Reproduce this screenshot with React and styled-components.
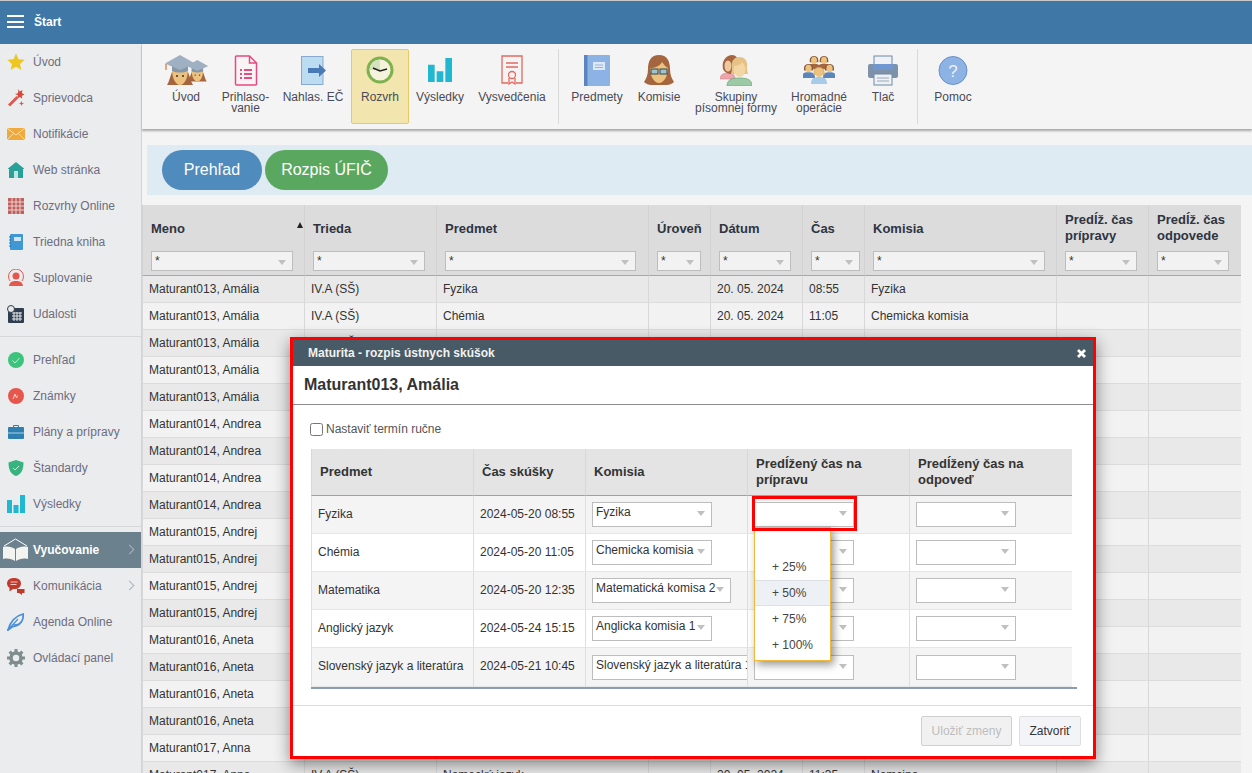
import React from 'react';
import styled, { createGlobalStyle } from 'styled-components';

const Global = createGlobalStyle`
  html, body { margin: 0; padding: 0; height: 773px; overflow: hidden; background: #f4f4f4; }
  body { font-family: "Liberation Sans", Arial, sans-serif; font-size: 12px; color: #333; }
  * { box-sizing: border-box; }
`;

const Page = styled.div`
  position: relative;
  width: 1252px;
  height: 773px;
  overflow: hidden;
`;
const TopBar = styled.div`
  height: 44px;
  padding: 0 0 2px 7px;
  background: #3f78a6;
  border-top: 1px solid #c9c9c9;
  display: flex;
  align-items: center;
  gap: 10px;
  color: #fff;
  font-weight: bold;
  position: relative;
  z-index: 3;
`;
const Burger = styled.div`
  width: 17px;
  height: 13px;
  border-top: 2px solid #fff;
  border-bottom: 2px solid #fff;
  position: relative;
  &::after {
    content: '';
    position: absolute;
    left: 0;
    right: 0;
    top: 3.5px;
    height: 2px;
    background: #fff;
  }
`;
const Shell = styled.div`
  display: flex;
  height: 729px;
`;
const Sidebar = styled.div`
  width: 142px;
  flex: none;
  background: #ebecee;
  border-right: 1px solid #d4d4d4;
`;
const NavItem = styled.div`
  height: 36px;
  display: flex;
  align-items: center;
  padding-left: ${p => (p.$active ? '2px' : '7px')};
  gap: ${p => (p.$active ? '4px' : '8px')};
  color: ${p => (p.$active ? '#fff' : '#6d6d80')};
  font-weight: ${p => (p.$active ? 'bold' : 'normal')};
  background: ${p => (p.$active ? '#6b828e' : 'transparent')};
  position: relative;
  svg { flex: none; }
`;
const NavArrow = styled.span`
  position: absolute;
  left: 126px;
  top: 14px;
  width: 7px;
  height: 7px;
  border-top: 1px solid #a9b4ba;
  border-right: 1px solid #a9b4ba;
  transform: rotate(45deg);
`;
const NavLine = styled.div`
  height: 1px;
  background: #d6d7d9;
  margin: 4px 0 5px;
`;
const Main = styled.div`
  flex: 1;
  min-width: 0;
  background: #f4f4f4;
`;
const Toolbar = styled.div`
  height: 85px;
  padding: 5px 0 0 14px;
  display: flex;
  align-items: flex-start;
  background: #f4f4f4;
  box-shadow: 0 2px 2px #a8a8a8;
`;
const Tool = styled.div`
  width: ${p => p.$w}px;
  height: 75px;
  flex: none;
  padding-top: 5px;
  display: flex;
  flex-direction: column;
  align-items: center;
  text-align: center;
  line-height: 11px;
  color: #4a4a55;
  border-radius: 2px;
  border: 1px solid ${p => (p.$on ? '#e9c963' : 'transparent')};
  background: ${p => (p.$on ? '#f2e5ad' : 'transparent')};
  white-space: pre-line;
`;
const ToolIcon = styled.div`
  height: 30px;
  margin-bottom: 7px;
  flex: none;
  display: flex;
  align-items: center;
  justify-content: center;
  svg { flex: none; }
`;
const ToolSep = styled.div`
  width: 1px;
  height: 75px;
  flex: none;
  background: #d9d9d9;
  margin: 0 ${p => p.$r}px 0 ${p => p.$l}px;
`;
const Band = styled.div`
  height: 50px;
  margin: 16px 0 10px 5px;
  padding: 5px 0 0 15px;
  display: flex;
  gap: 3px;
  background: #deebf3;
`;
const Pill = styled.div`
  width: ${p => p.$w}px;
  height: 40px;
  border-radius: 20px;
  display: flex;
  align-items: center;
  justify-content: center;
  color: #fff;
  font-size: 16px;
  background: ${p => p.$bg};
`;
const Grid = styled.table`
  table-layout: fixed;
  border-collapse: separate;
  border-spacing: 0;
  width: ${p => p.$w}px;
`;
const Col = styled.col`
  width: ${p => p.$w}px;
`;
const Head = styled.th`
  height: 71px;
  padding: 0 0 0 8px;
  text-align: left;
  vertical-align: top;
  background: #dcdcdc;
  border-left: 1px solid #d2d2d2;
  border-bottom: 1px solid #a2a9ae;
  position: relative;
`;
const HeadLabel = styled.div`
  height: 46px;
  padding-top: ${p => (p.$single ? '1px' : '0')};
  display: flex;
  align-items: center;
  font-size: 13px;
  line-height: 16px;
  color: #2f3440;
`;
const SortMark = styled.span`
  position: absolute;
  right: 1px;
  top: 17px;
  border-left: 3.5px solid transparent;
  border-right: 3.5px solid transparent;
  border-bottom: 6px solid #222;
`;
const Row = styled.tr`
  background: ${p => (p.$odd ? '#e9e9e9' : '#f2f2f2')};
`;
const Cell = styled.td`
  height: 27px;
  padding: 0 6px;
  white-space: nowrap;
  overflow: hidden;
  border-left: 1px solid #d8d8d8;
  border-bottom: 1px solid #dcdcdc;
`;
const Select = styled.div`
  width: ${p => p.$w}px;
  height: ${p => p.$h}px;
  padding: 2px 0 0 3px;
  background: ${p => p.$bg};
  border: 1px solid #bdbdbd;
  font-size: 12px;
  font-weight: normal;
  line-height: 14px;
  color: #333;
  white-space: nowrap;
  overflow: hidden;
  position: relative;
  &::after {
    content: '';
    position: absolute;
    right: 6px;
    top: 8px;
    border-left: 4px solid transparent;
    border-right: 4px solid transparent;
    border-top: 5px solid #c0c0c0;
  }
`;
const Modal = styled.div`
  position: absolute;
  left: 290px;
  top: 337px;
  width: 806px;
  height: 422px;
  border: 3px solid #ff0000;
  background: #fff;
  display: flex;
  flex-direction: column;
  box-shadow: 0 5px 15px rgba(0, 0, 0, 0.45);
  z-index: 5;
`;
const ModalTitle = styled.div`
  height: 26px;
  flex: none;
  padding: 0 6px 0 15px;
  display: flex;
  align-items: center;
  justify-content: space-between;
  background: #475a65;
  color: #f2f2f2;
  font-weight: bold;
`;
const ModalName = styled.div`
  height: 39px;
  flex: none;
  padding-left: 11px;
  display: flex;
  align-items: center;
  border-bottom: 1px solid #8c8c8c;
  font-size: 16px;
  font-weight: bold;
  color: #333;
`;
const ModalBody = styled.div`
  flex: 1;
  padding: 18px 0 0 18px;
`;
const CheckRow = styled.label`
  height: 13px;
  margin-bottom: 13px;
  display: flex;
  align-items: flex-start;
  gap: 3px;
  line-height: 12px;
  color: #555;
  input { width: 13px; height: 13px; margin: 0 0 0 -1px; }
`;
const ExamWrap = styled.div`
  width: 766px;
  border-bottom: 2px solid #8a9dae;
`;
const ExamHead = styled.th`
  height: 47px;
  padding: 0 9px 0 8px;
  text-align: left;
  font-size: 13px;
  line-height: 16px;
  color: #333;
  background: #e4e4e4;
  border-left: 1px solid #d8d8d8;
  border-bottom: 1px solid #9ba3a9;
`;
const ExamRow = styled.tr`
  background: ${p => (p.$odd ? '#f4f4f4' : '#fff')};
`;
const ExamCell = styled.td`
  height: ${p => p.$h}px;
  padding: 0 6px ${p => (p.$txt ? '2px' : '0')};
  white-space: nowrap;
  overflow: hidden;
  border-left: 1px solid #dedede;
  border-bottom: 1px solid #e6e6e6;
`;
const ModalFoot = styled.div`
  height: 51px;
  flex: none;
  padding: 10px 12px 0 0;
  display: flex;
  justify-content: flex-end;
  gap: 7px;
  border-top: 1px solid #dcdcdc;
`;
const Btn = styled.div`
  width: ${p => p.$w}px;
  height: 30px;
  display: flex;
  align-items: center;
  justify-content: center;
  border-radius: 2px;
  border: 1px solid ${p => (p.$off ? '#cfcfcf' : '#dedede')};
  background: ${p => (p.$off ? '#f1f1f1' : '#f3f4f8')};
  color: ${p => (p.$off ? '#bdbdbd' : '#333')};
`;
const Highlight = styled.div`
  position: absolute;
  left: 459px;
  top: 156px;
  width: 105px;
  height: 35px;
  border: 3px solid #ff0000;
  z-index: 3;
`;
const Popup = styled.div`
  position: absolute;
  left: 461px;
  top: 187px;
  width: 77px;
  height: 134px;
  background: #fff;
  border: 1px solid #f0b93a;
  box-shadow: 3px 4px 8px rgba(0, 0, 0, 0.4);
  z-index: 2;
`;
const PopupItem = styled.div`
  height: 26px;
  padding-left: 17px;
  display: flex;
  align-items: center;
  color: #444;
  background: ${p => (p.$on ? '#edf0f4' : 'transparent')};
  border-top: 1px solid ${p => (p.$on ? '#dcdfe3' : 'transparent')};
  border-bottom: 1px solid ${p => (p.$on ? '#dcdfe3' : 'transparent')};
`;

// sidebar icons
const Star = () => <svg width="18" height="18" viewBox="0 0 18 18"><path d="M9 .5l2.500 5.700 6.200.6-4.700 4.100 1.400 6.100L9 13.800l-5.400 3.200L5 10.900.3 6.800l6.200-.6z" fill="#edc71f" /></svg>;
const Wand = () => <svg width="18" height="20" viewBox="0 0 18 20"><path d="M1 16.500L9.500 8l2 2L3 18.500z" fill="#e2574c" /><path d="M11.500 1l1.200 2.600L15.500 2l-.7 3L17.500 6.500l-2.700 1.200.5 3-2.400-1.800-2.400 1.300.4-3L8 6l3-.8z" fill="#d9473c" /><path d="M14.500 13l.7 1.800 1.800.7-1.800.7-.7 1.800-.7-1.800-1.800-.7 1.800-.7z" fill="#e2574c" /></svg>;
const Mail = () => <svg width="18" height="18" viewBox="0 0 18 14"><rect y="1" width="18" height="12" fill="#f0a93c" /><path d="M0 1l9 7 9-7M0 13l6.500-6.500M18 13l-6.500-6.500" stroke="#fbe0ae" strokeWidth="1" fill="none" /></svg>;
const House = () => <svg width="18" height="18" viewBox="0 0 18 18"><path d="M9 1l8 6.500V8h-1v9H2V8H1v-.5z" fill="#2aa198" /><rect x="7" y="10" width="4" height="7" fill="#bfe6e2" /></svg>;
const CalGrid = () => <svg width="18" height="18" viewBox="0 0 18 18"><rect x="1" y="1" width="16" height="16" fill="#c0605c" /><path d="M1 5h16M1 9h16M1 13h16M5 1v16M9 1v16M13 1v16" stroke="#ecd0ce" strokeWidth="1" /></svg>;
const NoteBook = () => <svg width="18" height="18" viewBox="0 0 18 18"><rect x="3" y="1" width="13" height="16" rx="1" fill="#3f97d3" /><rect x="7" y="4" width="7" height="4" fill="#cfe6f6" /><path d="M2 4h2M2 7h2M2 10h2M2 13h2" stroke="#1f6fa8" strokeWidth="1" /></svg>;
const Subst = () => <svg width="18" height="18" viewBox="0 0 18 18"><path d="M3 12A7.500 7.500 0 1 1 15 12" stroke="#e5574c" strokeWidth="1" fill="none" /><circle cx="9" cy="7" r="3.500" fill="#e5574c" /><path d="M2 17c.5-4 3-5 7-5s6.500 1 7 5z" fill="#e5574c" /></svg>;
const Events = () => <svg width="18" height="18" viewBox="0 0 18 18"><rect x="1" y="3" width="16" height="15" rx="1" fill="#2f3e4e" /><path d="M5 8h10M5 11h10M5 14h10M7 7v9M10 7v9M13 7v9" stroke="#e4e7ea" strokeWidth="1" /><circle cx="4" cy="4" r="3.500" fill="#e8e8e8" stroke="#2f3e4e" /></svg>;
const CheckDot = () => <svg width="18" height="18" viewBox="0 0 18 18"><circle cx="9" cy="9" r="8" fill="#3cc47c" /><path d="M5.500 9.500l2.500 2.500 4.500-5" stroke="#bfeed4" fill="none" /></svg>;
const GradeDot = () => <svg width="18" height="18" viewBox="0 0 18 18"><circle cx="9" cy="9" r="8" fill="#e5574c" /><path d="M6 12l2-5 1.500 4 1-2.500" stroke="#f7d0cc" fill="none" /></svg>;
const Case = () => <svg width="18" height="18" viewBox="0 0 18 18"><path d="M6.500 4V2.500h5V4" stroke="#2f80b0" fill="none" /><rect x="1" y="4" width="16" height="12" rx="1" fill="#2f80b0" /><path d="M1 10h16" stroke="#a9d2e8" /></svg>;
const Shield = () => <svg width="18" height="18" viewBox="0 0 18 18"><path d="M9 1l7.500 2.500c0 7-2 11.500-7.500 13.500C3.500 15 1.500 10.500 1.500 3.500z" fill="#36b37e" /><path d="M6 9l2 2 4-4" stroke="#c5eedb" fill="none" /></svg>;
const Bars = ({ w = 14, h = 14 }) => <svg width={w} height={h} viewBox="0 0 18 18"><path d="M0 5h5v13H0zM6.500 10h5v8h-5zM13 0h5v18h-5z" fill="#1fb8d0" /></svg>;
const BarsNav = () => <Bars w={18} h={18} />;
const OpenBook = () => <svg width="27" height="25" viewBox="0 0 27 25"><path d="M2 8L13.500 1 25 8" stroke="#fff" fill="none" /><path d="M1 9c5-1 9 0 12 2v12c-3-2-7-3-12-2zM26 9c-5-1-9 0-12 2v12c3-2 7-3 12-2z" fill="#f3f4f2" /></svg>;
const Chat = () => <svg width="18" height="18" viewBox="0 0 18 18"><path d="M0 6.500A6 5.500 0 0 1 6 1h2a6 5.500 0 0 1 0 11H6l-3.500 2.500V11A5.500 5.500 0 0 1 0 6.500z" fill="#c0392b" /><path d="M3.500 5h7M3.500 7.500h6" stroke="#f0c8c3" /><path d="M10 12h7.500v4H15v2l-3-2h-2z" fill="#c0392b" /></svg>;
const Feather = () => <svg width="18" height="18" viewBox="0 0 18 18"><path d="M1 17C3 10 8 3 16 1c1 5-2 11-8 12l-3 1z" fill="none" stroke="#4a90d9" strokeWidth="1.800" /><path d="M1 17L11 6M6 12l6-1" stroke="#4a90d9" strokeWidth="1.200" /></svg>;
const Gear = () => <svg width="18" height="18" viewBox="0 0 18 18"><circle cx="9" cy="9" r="5" fill="none" stroke="#7f8c8d" strokeWidth="3.500" /><path d="M9 0v3.500M9 14.500V18M0 9h3.500M14.500 9H18M2.600 2.600l2.500 2.500M12.900 12.900l2.500 2.500M15.400 2.600l-2.500 2.500M5.100 12.900l-2.500 2.500" stroke="#7f8c8d" strokeWidth="3" /></svg>;

// toolbar icons
const Grad = ({ x, y, s }) => (
  <g transform={`translate(${x} ${y}) scale(${s})`}>
    <path d="M5 17C3 22 2 27 0 30h26c-2-3-3-8-5-13z" fill="#a5663f" />
    <path d="M5 14c0 10 4 16 8 16s8-6 8-16z" fill="#edc27e" />
    <circle cx="10" cy="21" r="1" fill="#333" /><circle cx="16" cy="21" r="1" fill="#333" />
    <path d="M5 11v5c5 2 11 2 16 0v-5z" fill="#8598ab" />
    <path d="M13 0l15 8.500L13 15-2 8.500z" fill="#9fb0c2" />
    <path d="M-1 9v6" stroke="#d98c5a" strokeWidth="1.500" />
  </g>
);
const Grads = () => <svg width="44" height="31" viewBox="0 0 44 31"><Grad x={24} y={5} s={0.72} /><Grad x={3} y={0} s={1} /></svg>;
const DocList = () => <svg width="24" height="31" viewBox="0 0 24 31"><path d="M2.500 1h13l7 7v21a1 1 0 0 1-1 1h-19a1 1 0 0 1-1-1V2a1 1 0 0 1 1-1z" fill="#f8f4f6" stroke="#e84a7f" strokeWidth="1.500" /><path d="M15.500 1v7h7" fill="none" stroke="#e84a7f" strokeWidth="1.500" /><path d="M6 15h2M10 15h8M6 19h2M10 19h8M6 23h2M10 23h8" stroke="#e84a7f" strokeWidth="1.800" /></svg>;
const Report = () => <svg width="25" height="29" viewBox="0 0 25 29"><rect x=".5" y=".5" width="21.500" height="28" fill="#bcdcf2" stroke="#8aa9d0" /><path d="M7 12h11V8l7 6.500-7 6.500v-4H7z" fill="#4a7ab5" /></svg>;
const Clock = () => <svg width="28" height="28" viewBox="0 0 28 28"><circle cx="14" cy="14" r="12" fill="#f6f3dc" stroke="#7fb24f" strokeWidth="3" /><path d="M14 14V3.500A10.500 10.500 0 0 0 3.500 14z" fill="#d4e2bd" /><path d="M7 12l7 3 7-2" fill="none" stroke="#222" strokeWidth="1.500" /></svg>;
const Cert = () => <svg width="22" height="30" viewBox="0 0 22 30"><path d="M7 28H1V1h20v27h-6" fill="none" stroke="#e46a5e" strokeWidth="1.300" /><path d="M5 8h12M5 12h12" stroke="#e46a5e" strokeWidth="1.300" /><circle cx="11" cy="20" r="3.500" fill="none" stroke="#e46a5e" strokeWidth="1.300" /><path d="M8 23v6l3-2 3 2v-6" fill="none" stroke="#e46a5e" strokeWidth="1.300" /></svg>;
const Book = () => <svg width="26" height="31" viewBox="0 0 26 31"><rect width="26" height="31" rx="1" fill="#8db2e4" /><rect width="3.500" height="31" fill="#5a85bf" /><rect x="9" y="7" width="12" height="8" fill="#dde8f6" /><path d="M11 10h8M11 12.500h8" stroke="#9fb4cf" /></svg>;
const Woman = () => <svg width="30" height="31" viewBox="0 0 30 31"><path d="M15 0c8 0 11 6 11 14 0 6 2 10 4 13-2 2-5 3-7 3H7c-2 0-5-1-7-3 2-3 4-7 4-13C4 6 7 0 15 0z" fill="#a5663f" /><path d="M6 13c5 0 10-2 12-6 2 3 4 5 6 6 0 8-4 15-9 15S6 21 6 13z" fill="#edc27e" /><rect x="7" y="14" width="7" height="5" fill="#9fc3d2" stroke="#33464f" /><rect x="16" y="14" width="7" height="5" fill="#9fc3d2" stroke="#33464f" /></svg>;
const Pair = () => (
  <svg width="32" height="31" viewBox="0 0 32 31">
    <path d="M0 24c0-4 3-6 8-6s7 2 7 6z" fill="#eea4ab" stroke="#d98a92" strokeWidth=".6" />
    <path d="M3 14C1 4 8 0 12 0c4 0 6 3 6 7l-6 12c-4 0-8-2-9-5z" fill="#a5663f" />
    <ellipse cx="8" cy="11" rx="3.500" ry="5.500" fill="#edc9a0" />
    <path d="M7 31c0-6 4-8 12.500-8S32 25 32 31z" fill="#9ccaa5" stroke="#6fae82" strokeWidth=".8" />
    <path d="M12 12C11 5 15 2 19.500 2S28 5 27 12c0 3 .5 5 1 7H11c.5-2 1-4 1-7z" fill="#e6c285" />
    <ellipse cx="19.500" cy="14" rx="6" ry="8" fill="#f4d6a4" />
    <path d="M13.500 11c3 0 7-1 9-4 1 2 2 4 3 4l1-3-5-4-7 1z" fill="#e6c285" />
  </svg>
);
const Person = ({ x, y, s, shirt, hair }) => (
  <g transform={`translate(${x} ${y}) scale(${s})`}>
    <path d="M-8 17c0-6 3-7 8-7s8 1 8 7z" fill={shirt} />
    <path d="M-5.500 5C-5.500-1.500 5.500-1.500 5.500 5v3h-11z" fill={hair} />
    <ellipse rx="3.800" ry="4.600" cy="5.500" fill="#edc27e" />
  </g>
);
const Crowd = () => (
  <svg width="32" height="30" viewBox="0 0 32 30">
    <Person x={11} y={1} s={0.78} shirt="#a5663f" hair="#8b5a3a" />
    <Person x={21} y={1} s={0.78} shirt="#a5663f" hair="#8b5a3a" />
    <Person x={5.500} y={9} s={0.82} shirt="#5b85bd" hair="#8b5a3a" />
    <Person x={26.500} y={9} s={0.82} shirt="#5b85bd" hair="#8b5a3a" />
    <Person x={16} y={12} s={1} shirt="#a9cbea" hair="#dcb87c" />
  </svg>
);
const Printer = () => <svg width="30" height="31" viewBox="0 0 30 31"><rect x="6" y="1" width="18" height="9" fill="#eef1f5" stroke="#6f8aa5" /><rect y="9" width="30" height="14" rx="2" fill="#7d92a8" /><rect x="5" y="9" width="20" height="6" fill="#6f97d0" /><rect x="6" y="19" width="18" height="11" fill="#eef1f5" stroke="#6f8aa5" /><path d="M9 23h12M9 26h12" stroke="#9aa7b5" /></svg>;
const Help = () => <svg width="30" height="31" viewBox="0 0 30 31"><circle cx="15" cy="15.500" r="14" fill="#8db2e4" stroke="#6a90c8" /><text x="15" y="21.500" textAnchor="middle" fontSize="17" fontFamily="Liberation Sans" fill="#eef3fb">?</text></svg>;
const CloseX = () => <svg width="11" height="11" viewBox="0 0 11 11"><path d="M2 2l7 7M9 2l-7 7" stroke="#fff" strokeWidth="2.800" /></svg>;

const navTop = [
  [Star, 'Úvod'], [Wand, 'Sprievodca'], [Mail, 'Notifikácie'], [House, 'Web stránka'],
  [CalGrid, 'Rozvrhy Online'], [NoteBook, 'Triedna kniha'], [Subst, 'Suplovanie'], [Events, 'Udalosti'],
];
const navMid = [
  [CheckDot, 'Prehľad'], [GradeDot, 'Známky'], [Case, 'Plány a prípravy'], [Shield, 'Štandardy'], [BarsNav, 'Výsledky'],
];

const cols = [162, 132, 212, 62, 92, 62, 192, 92, 93];
const filterWidths = [142, 112, 191, 44, 72, 49, 172, 72, 72];
const heads = ['Meno', 'Trieda', 'Predmet', 'Úroveň', 'Dátum', 'Čas', 'Komisia', 'Predĺž. čas\nprípravy', 'Predĺž. čas\nodpovede'];
const rows = [
  ['Maturant013, Amália', 'Fyzika', '20. 05. 2024', '08:55', 'Fyzika'],
  ['Maturant013, Amália', 'Chémia', '20. 05. 2024', '11:05', 'Chemicka komisia'],
  ['Maturant013, Amália', 'Matematika', '20. 05. 2024', '12:35', 'Matematická komisa 2'],
  ['Maturant013, Amália', 'Anglický jazyk', '24. 05. 2024', '15:15', 'Anglicka komisia 1'],
  ['Maturant013, Amália', 'Slovenský jazyk', '21. 05. 2024', '10:45', 'Slovenský jazyk'],
  ['Maturant014, Andrea', 'Fyzika', '', '', ''],
  ['Maturant014, Andrea', 'Chémia', '', '', ''],
  ['Maturant014, Andrea', 'Matematika', '', '', ''],
  ['Maturant014, Andrea', 'Anglický jazyk', '', '', ''],
  ['Maturant015, Andrej', 'Fyzika', '', '', ''],
  ['Maturant015, Andrej', 'Chémia', '', '', ''],
  ['Maturant015, Andrej', 'Matematika', '', '', ''],
  ['Maturant015, Andrej', 'Anglický jazyk', '', '', ''],
  ['Maturant016, Aneta', 'Fyzika', '', '', ''],
  ['Maturant016, Aneta', 'Chémia', '', '', ''],
  ['Maturant016, Aneta', 'Matematika', '', '', ''],
  ['Maturant016, Aneta', 'Anglický jazyk', '', '', ''],
  ['Maturant017, Anna', 'Fyzika', '', '', ''],
  ['Maturant017, Anna', 'Nemecký jazyk', '20. 05. 2024', '11:35', 'Nemcina'],
];

const exam = [
  ['Fyzika', '2024-05-20 08:55', 'Fyzika', 120],
  ['Chémia', '2024-05-20 11:05', 'Chemicka komisia', 120],
  ['Matematika', '2024-05-20 12:35', 'Matematická komisa 2', 139],
  ['Anglický jazyk', '2024-05-24 15:15', 'Anglicka komisia 1', 120],
  ['Slovenský jazyk a literatúra', '2024-05-21 10:45', 'Slovenský jazyk a literatúra 1', 175],
];

function App() {
  return (
    <Page>
      <Global />
      <TopBar><Burger />Štart</TopBar>
      <Shell>
        <Sidebar>
          {navTop.map(([Icon, label]) => <NavItem key={label}><Icon />{label}</NavItem>)}
          <NavLine />
          {navMid.map(([Icon, label]) => <NavItem key={label}><Icon />{label}</NavItem>)}
          <NavLine />
          <NavItem $active><OpenBook />Vyučovanie<NavArrow /></NavItem>
          <NavItem><Chat />Komunikácia<NavArrow /></NavItem>
          <NavItem><Feather />Agenda Online</NavItem>
          <NavItem><Gear />Ovládací panel</NavItem>
        </Sidebar>
        <Main>
          <Toolbar>
            <Tool $w={60}><ToolIcon><Grads /></ToolIcon>Úvod</Tool>
            <Tool $w={59}><ToolIcon><DocList /></ToolIcon>{'Prihlaso-\nvanie'}</Tool>
            <Tool $w={76}><ToolIcon><Report /></ToolIcon>Nahlas. EČ</Tool>
            <Tool $w={58} $on><ToolIcon><Clock /></ToolIcon>Rozvrh</Tool>
            <Tool $w={62}><ToolIcon><Bars w={24} h={24} /></ToolIcon>Výsledky</Tool>
            <Tool $w={82}><ToolIcon><Cert /></ToolIcon>Vysvedčenia</Tool>
            <ToolSep $l={5} $r={4} />
            <Tool $w={68}><ToolIcon><Book /></ToolIcon>Predmety</Tool>
            <Tool $w={56}><ToolIcon><Woman /></ToolIcon>Komisie</Tool>
            <Tool $w={98}><ToolIcon><Pair /></ToolIcon>{'Skupiny\npísomnej formy'}</Tool>
            <Tool $w={68}><ToolIcon><Crowd /></ToolIcon>{'Hromadné\noperácie'}</Tool>
            <Tool $w={60}><ToolIcon><Printer /></ToolIcon>Tlač</Tool>
            <ToolSep $l={4} $r={4} />
            <Tool $w={62}><ToolIcon><Help /></ToolIcon>Pomoc</Tool>
          </Toolbar>
          <Band>
            <Pill $w={100} $bg="#4f8bbd">Prehľad</Pill>
            <Pill $w={123} $bg="#5aa85f">Rozpis ÚFIČ</Pill>
          </Band>
          <Grid $w={1099}>
            <colgroup>{cols.map((w, i) => <Col key={i} $w={w} />)}</colgroup>
            <thead>
              <tr>
                {heads.map((h, i) => (
                  <Head key={h + i}>
                    <HeadLabel $single={!h.includes('\n')}>
                      <span>{h.split('\n').map(l => <React.Fragment key={l}>{l}<br /></React.Fragment>)}</span>
                    </HeadLabel>
                    {i === 0 && <SortMark />}
                    <Select $w={filterWidths[i]} $h={20} $bg="#f2f2f2">*</Select>
                  </Head>
                ))}
              </tr>
            </thead>
            <tbody>
              {rows.map((r, i) => (
                <Row key={i} $odd={i % 2 === 0}>
                  <Cell>{r[0]}</Cell>
                  <Cell>IV.A (SŠ)</Cell>
                  <Cell>{r[1]}</Cell>
                  <Cell />
                  <Cell>{r[2]}</Cell>
                  <Cell>{r[3]}</Cell>
                  <Cell>{r[4]}</Cell>
                  <Cell />
                  <Cell />
                </Row>
              ))}
            </tbody>
          </Grid>
        </Main>
      </Shell>

      <Modal>
        <ModalTitle>Maturita - rozpis ústnych skúšok<CloseX /></ModalTitle>
        <ModalName>Maturant013, Amália</ModalName>
        <ModalBody>
          <CheckRow><input type="checkbox" readOnly />Nastaviť termín ručne</CheckRow>
          <ExamWrap>
            <Grid $w={761}>
              <colgroup>{[162, 112, 162, 162, 163].map((w, i) => <Col key={i} $w={w} />)}</colgroup>
              <thead>
                <tr>
                  <ExamHead>Predmet</ExamHead>
                  <ExamHead>Čas skúšky</ExamHead>
                  <ExamHead>Komisia</ExamHead>
                  <ExamHead>Predĺžený čas na<br />prípravu</ExamHead>
                  <ExamHead>Predĺžený čas na<br />odpoveď</ExamHead>
                </tr>
              </thead>
              <tbody>
                {exam.map((r, i) => {
                  const h = i === 4 ? 39 : 38;
                  return (
                    <ExamRow key={r[0]} $odd={i % 2 === 0}>
                      <ExamCell $h={h} $txt>{r[0]}</ExamCell>
                      <ExamCell $h={h} $txt>{r[1]}</ExamCell>
                      <ExamCell $h={h}><Select $w={r[3]} $h={25} $bg="#fff">{r[2]}</Select></ExamCell>
                      <ExamCell $h={h}><Select $w={100} $h={25} $bg="#fff" /></ExamCell>
                      <ExamCell $h={h}><Select $w={100} $h={25} $bg="#fff" /></ExamCell>
                    </ExamRow>
                  );
                })}
              </tbody>
            </Grid>
          </ExamWrap>
        </ModalBody>
        <ModalFoot>
          <Btn $w={91} $off>Uložiť zmeny</Btn>
          <Btn $w={62}>Zatvoriť</Btn>
        </ModalFoot>
        <Highlight />
        <Popup>
          <PopupItem />
          <PopupItem>+ 25%</PopupItem>
          <PopupItem $on>+ 50%</PopupItem>
          <PopupItem>+ 75%</PopupItem>
          <PopupItem>+ 100%</PopupItem>
        </Popup>
      </Modal>
    </Page>
  );
}

export default App;
